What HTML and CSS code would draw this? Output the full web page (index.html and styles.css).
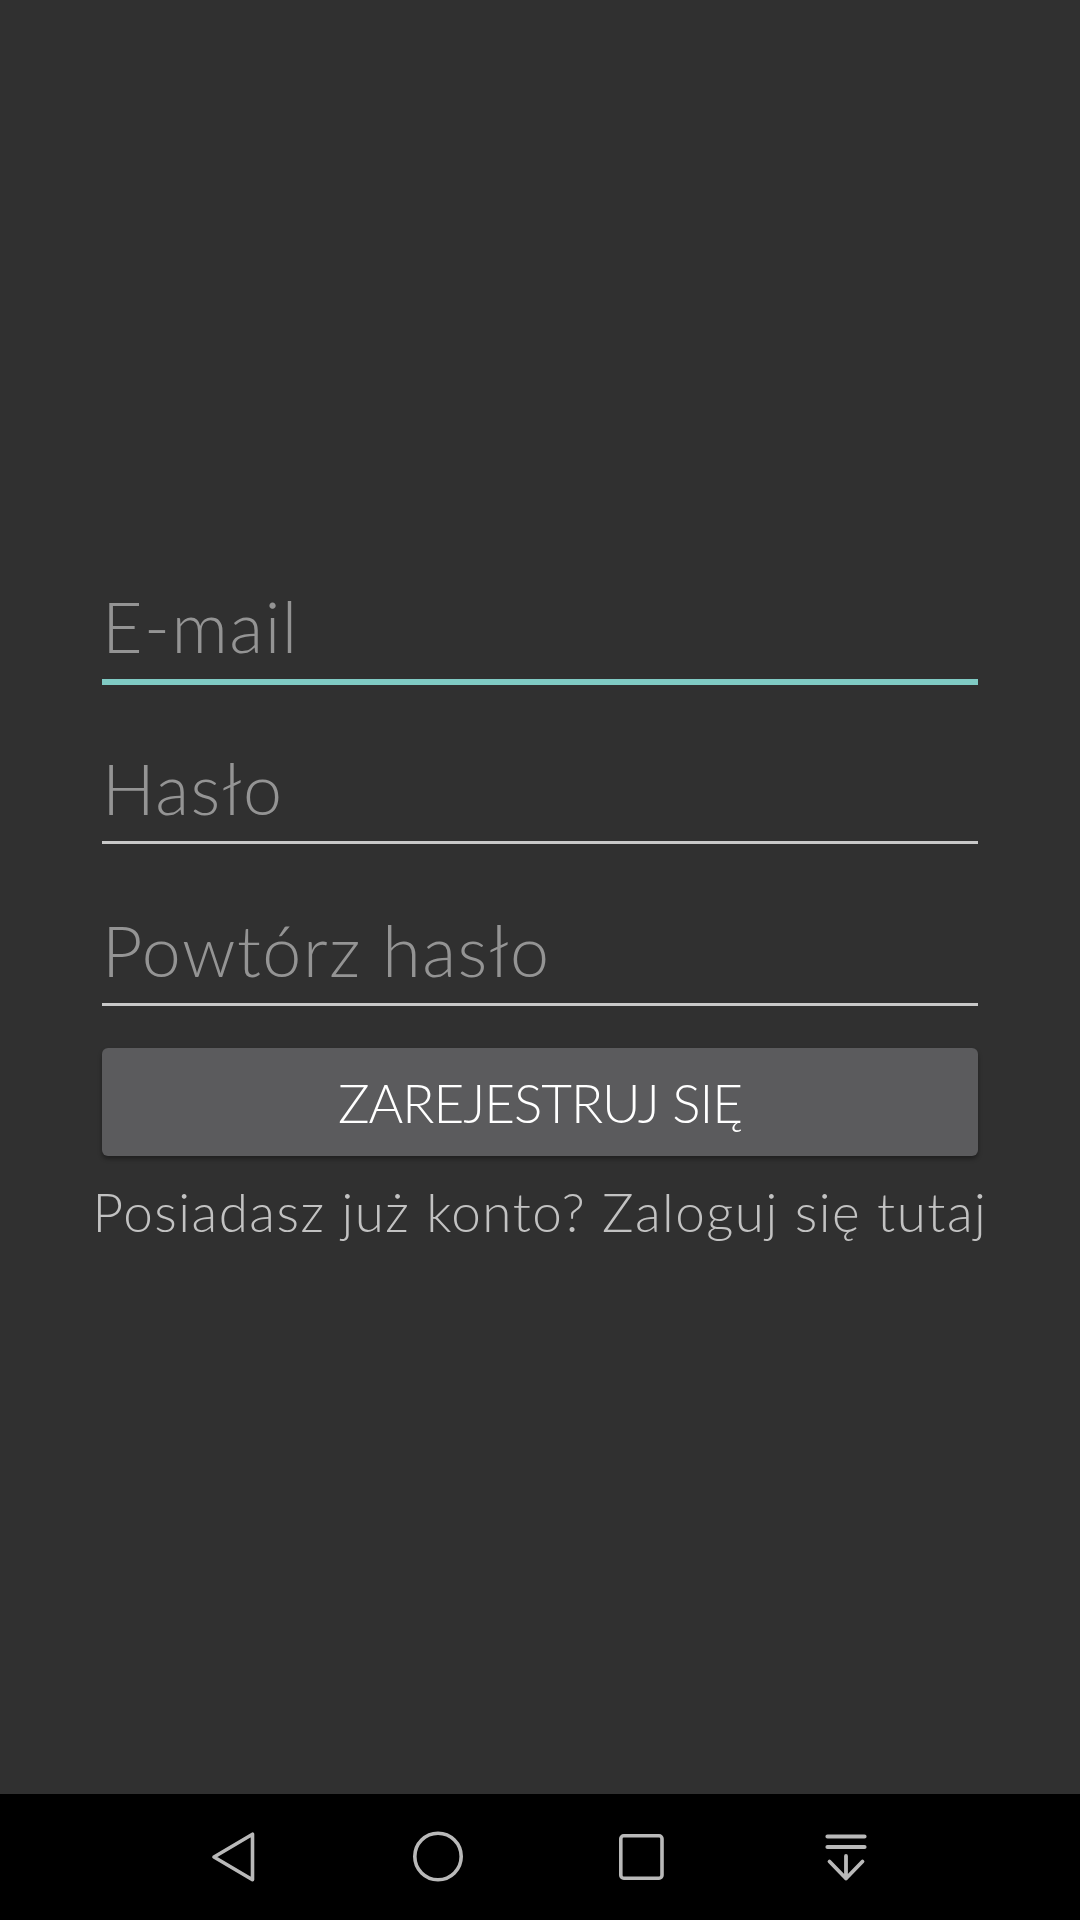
FILE: index.html
```html
<!DOCTYPE html>
<html lang="pl">
<head>
<meta charset="utf-8">
<title>Rejestracja</title>
<link rel="stylesheet" href="styles.css">
</head>
<body>
<div class="screen">
  <main class="content">
    <form class="form">
      <div class="field focused"><span class="hint">E-mail</span></div>
      <div class="field"><span class="hint">Hasło</span></div>
      <div class="field last"><span class="hint">Powtórz hasło</span></div>
      <button type="button" class="btn">ZAREJESTRUJ SIĘ</button>
    </form>
    <div class="link-row"><span class="link">Posiadasz już konto? Zaloguj się tutaj</span></div>
  </main>
  <nav class="navbar">
    <div class="navbtn">
      <svg width="60" height="60" viewBox="0 0 60 60"><path d="M10 30 L48.5 7.2 L48.5 52.8 Z" fill="none" stroke="#b9b9b9" stroke-width="3.6" stroke-linejoin="round"/></svg>
    </div>
    <div class="navbtn">
      <svg width="60" height="60" viewBox="0 0 60 60"><circle cx="30" cy="29.5" r="23.2" fill="none" stroke="#b9b9b9" stroke-width="3.6"/></svg>
    </div>
    <div class="navbtn">
      <svg width="60" height="60" viewBox="0 0 60 60"><rect x="8.8" y="8.8" width="41.2" height="42.4" rx="3" fill="none" stroke="#b9b9b9" stroke-width="3.6"/></svg>
    </div>
    <div class="navbtn">
      <svg width="60" height="60" viewBox="0 0 60 60"><g fill="none" stroke="#b9b9b9" stroke-linecap="round" stroke-linejoin="round"><path d="M11.5 9.5 H48.5 M11.5 20 H48.5" stroke-width="4.2"/><path d="M30 29 V51.5 M13.5 34.5 L30 51.5 L46.5 34.5" stroke-width="3.8"/></g></svg>
    </div>
  </nav>
</div>
</body>
</html>
```
FILE: styles.css
```css
html, body {
  margin: 0;
  padding: 0;
  background: #303030;
}
body {
  font-family: "Lato", "Open Sans", "Noto Sans", sans-serif;
  font-weight: 300;
}
.screen {
  width: 1080px;
  height: 1920px;
  display: flex;
  flex-direction: column;
}
.content {
  flex: 1;
  padding-top: 584px;
  box-sizing: border-box;
}
.form {
  padding: 0 102px;
  margin: 0;
}
.field {
  font-size: 70px;
  line-height: 84px;
  letter-spacing: 1.5px;
  padding-bottom: 11px;
  border-bottom: 3px solid #c8c8c8;
  margin-bottom: 64px;
  padding-left: 0;
}
.field.focused {
  border-bottom: 6px solid #80cbc4;
  margin-bottom: 61px;
}
.field.last {
  margin-bottom: 42px;
}
.hint {
  color: #949494;
  white-space: nowrap;
}
.btn {
  display: flex;
  align-items: center;
  justify-content: center;
  width: 100%;
  height: 108px;
  background: #5b5b5d;
  border: none;
  border-radius: 6px;
  box-shadow: 0 3px 4px rgba(0, 0, 0, 0.35);
  color: #ffffff;
  font-family: inherit;
  font-weight: 300;
  font-size: 53px;
  letter-spacing: -1px;
  padding: 0;
}
.link-row {
  display: flex;
  justify-content: center;
  margin-top: 24px;
  font-size: 53px;
  line-height: 64px;
  letter-spacing: 1.5px;
  white-space: nowrap;
}
.link {
  color: #c2c2c2;
}
.navbar {
  height: 126px;
  background: #000000;
  display: flex;
  justify-content: center;
  align-items: center;
}
.navbtn {
  width: 204px;
  height: 60px;
  display: flex;
  justify-content: center;
  align-items: center;
}
.navbtn svg {
  display: block;
}
```
